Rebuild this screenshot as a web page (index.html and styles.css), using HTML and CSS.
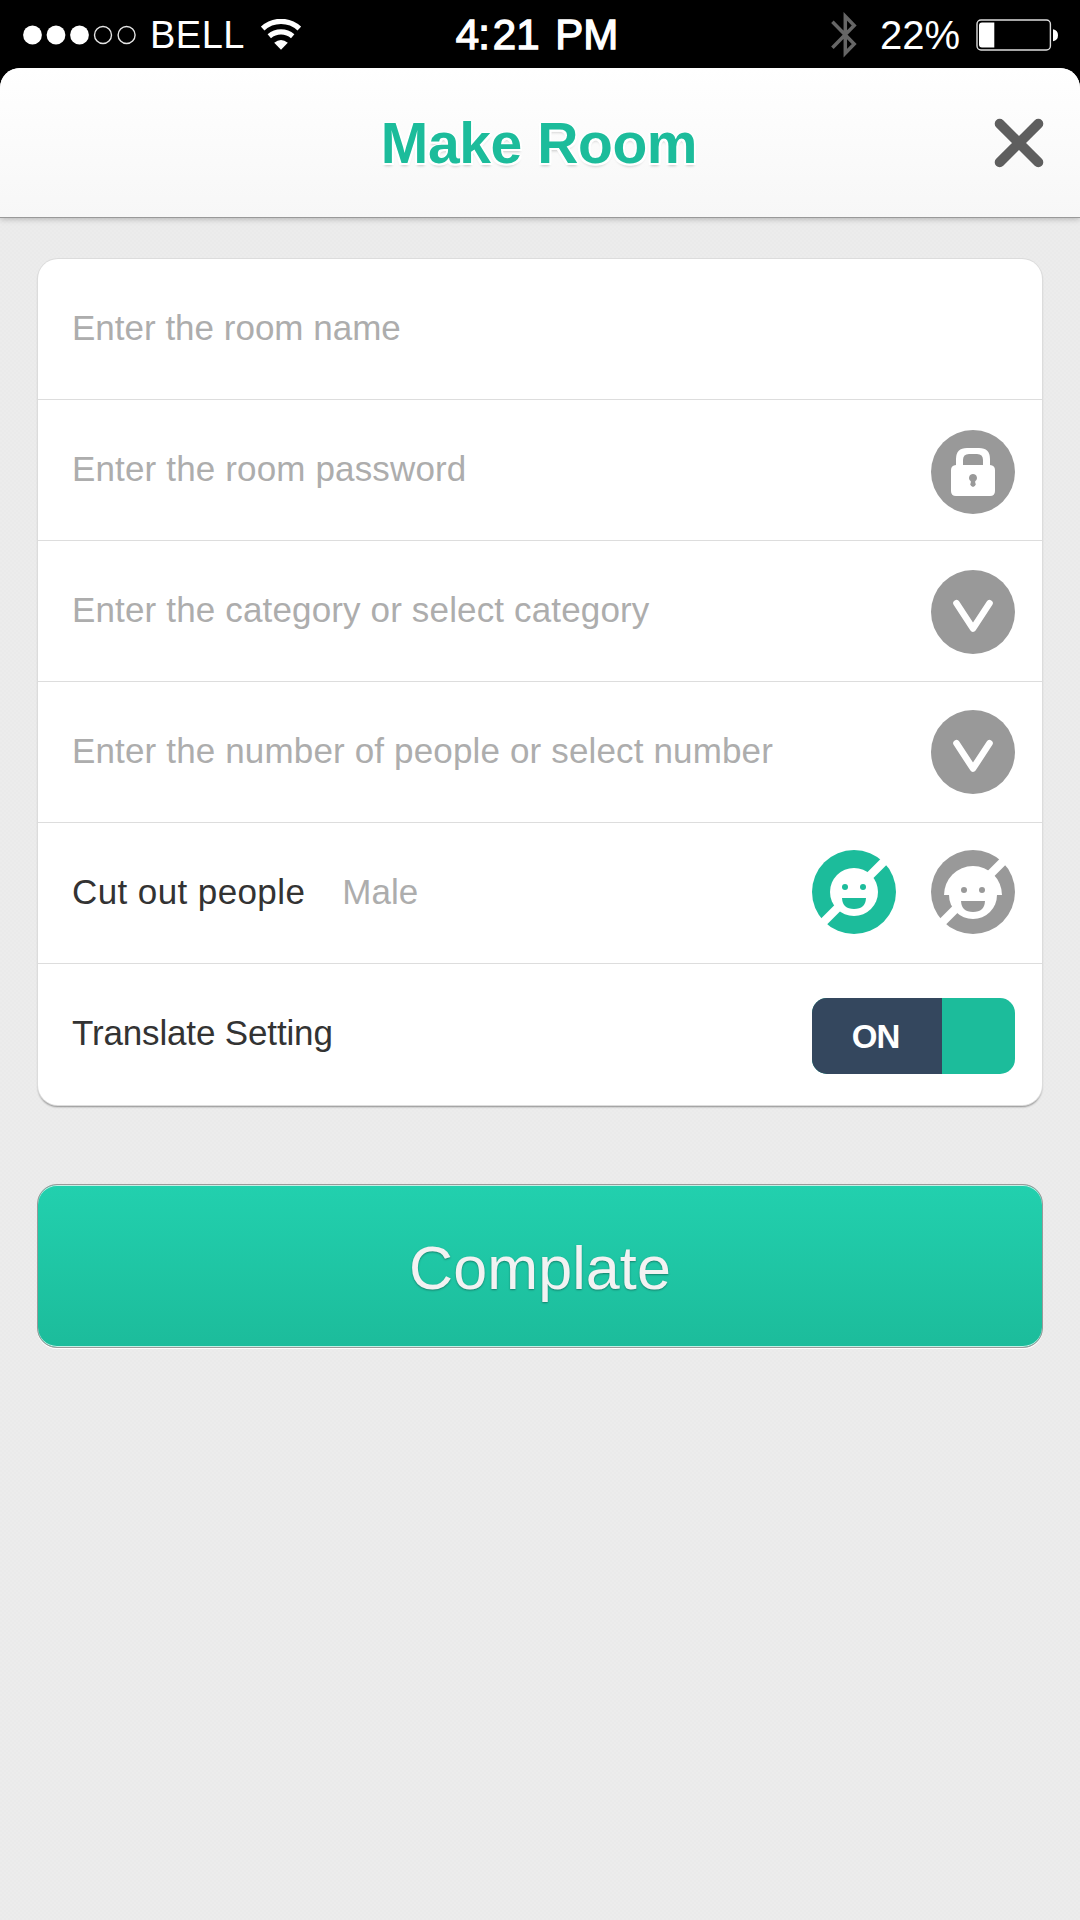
FILE: index.html
```html
<!DOCTYPE html>
<html lang="en">
<head>
<meta charset="utf-8">
<title>Make Room</title>
<link rel="stylesheet" href="styles.css">
</head>
<body>
<div class="status">
  <div class="status-left">
    <svg class="signal" width="114" height="20" viewBox="0 0 114 20">
      <g fill="#fff"><circle cx="9.5" cy="10" r="9.4"/><circle cx="33" cy="10" r="9.4"/><circle cx="56.5" cy="10" r="9.4"/></g>
      <g fill="none" stroke="#e4e4e4" stroke-width="1.4"><circle cx="80" cy="10" r="8.5"/><circle cx="103.6" cy="10" r="8.5"/></g>
    </svg>
    <span class="carrier">BELL</span>
    <svg class="wifi" width="40" height="32" viewBox="0 0 40 32">
      <g fill="none" stroke="#fff" stroke-width="5.2"><path d="M1.7 9.5A27 27 0 0 1 38.3 9.5"/><path d="M8.3 17.2A18 18 0 0 1 31.7 17.2"/></g>
      <path fill="#fff" d="M13.2 23.7Q20 18.2 26.8 23.7L20 30.8Z"/>
    </svg>
  </div>
  <div class="clock"><span class="hour">4</span><span class="colon">:</span><span class="minutes">21 PM</span></div>
  <div class="status-right">
    <svg class="bluetooth" width="27" height="46" viewBox="0 0 27 46"><path fill="none" stroke="#666" stroke-width="3.5" d="M1.4 9.8L23.2 32L14.3 41.2V4.3L23.2 13.5L1.4 35.7"/></svg>
    <span class="percent">22%</span>
    <svg class="battery" width="83" height="32" viewBox="0 0 83 32">
      <rect x="1" y="1" width="73.4" height="30" rx="4" fill="none" stroke="#ddd" stroke-width="1.4"/>
      <path fill="#fff" d="M3 6.500a3 3 0 0 1 3-3H18.300V28.500H6a3 3 0 0 1-3-3ZM77 10.300q5 1 5 6t-5 6Z"/>
    </svg>
  </div>
</div>
<div class="screen">
  <header class="header">
    <h1 class="title">Make Room</h1>
    <svg class="close" width="50" height="50" viewBox="0 0 50 50"><path stroke="#5e5e5e" stroke-width="10" stroke-linecap="round" d="M5.700 5.700L44.300 44.300M44.300 5.700L5.700 44.300"/></svg>
  </header>
  <main class="content">
    <section class="card">
      <div class="row"><span class="hint name">Enter the room name</span></div>
      <div class="row">
        <span class="hint">Enter the room password</span>
        <svg class="icon icon-lock" viewBox="0 0 84 84">
          <circle cx="42" cy="42" r="42" fill="#999"/>
          <path fill="#fff" fill-rule="evenodd" d="M25 35V29Q25 18 36 18H48Q59 18 59 29V35Q64 35.500 64 40V61Q64 66 59 66H25Q20 66 20 61V40Q20 35.500 25 35ZM32 35H52V30Q52 24 46 24H38Q32 24 32 30Z"/>
          <path fill="#999" d="M42 44a4 4 0 0 1 2.200 7.300V52.500a2.700 2.700 0 1 1-4.400 0V51.300A4 4 0 0 1 42 44Z"/>
        </svg>
      </div>
      <div class="row">
        <span class="hint">Enter the category or select category</span>
        <svg class="icon icon-category" viewBox="0 0 84 84"><circle cx="42" cy="42" r="42" fill="#999"/><path fill="none" stroke="#fff" stroke-width="6.600" stroke-linecap="round" stroke-linejoin="round" d="M25.500 33.300L42 58.500L58.500 33.300"/></svg>
      </div>
      <div class="row">
        <span class="hint">Enter the number of people or select number</span>
        <svg class="icon" viewBox="0 0 84 84"><circle cx="42" cy="42" r="42" fill="#999"/><path fill="none" stroke="#fff" stroke-width="6.600" stroke-linecap="round" stroke-linejoin="round" d="M25.500 33.300L42 58.500L58.500 33.300"/></svg>
      </div>
      <div class="row">
        <span class="label">Cut out people</span>
        <span class="hint value">Male</span>
        <div class="faces">
          <svg class="icon" viewBox="0 0 84 84">
            <circle cx="42" cy="42" r="42" fill="#1cbc9b"/>
            <path stroke="#fff" stroke-width="8.300" d="M5 78.500L78 5.500"/>
            <circle cx="42" cy="42" r="24" fill="#fff"/>
            <g fill="#1cbc9b"><circle cx="33" cy="37" r="3"/><circle cx="51" cy="37" r="3"/><path d="M30 48H54Q53.500 59 42 59T30 48Z"/></g>
          </svg>
          <svg class="icon" viewBox="0 0 84 84">
            <circle cx="42" cy="42" r="42" fill="#999"/>
            <path stroke="#fff" stroke-width="8.300" d="M5 78.500L78 5.500"/>
            <circle cx="42" cy="45" r="24" fill="#fff"/>
            <path fill="#fff" d="M13 45A29 29 0 0 1 71 45Z"/>
            <g fill="#999"><circle cx="33" cy="40" r="3"/><circle cx="51" cy="40" r="3"/><path d="M30 51H54Q53.500 62 42 62T30 51Z"/></g>
          </svg>
        </div>
      </div>
      <div class="row">
        <span class="label translate">Translate Setting</span>
        <div class="toggle"><span class="toggle-on">ON</span></div>
      </div>
    </section>
    <button class="submit" type="button">Complate</button>
  </main>
</div>
</body>
</html>
```
FILE: styles.css
```css
* { box-sizing: border-box; }
body {
  margin: 0;
  width: 1080px;
  height: 1920px;
  overflow: hidden;
  display: flex;
  flex-direction: column;
  background: #000;
  font-family: "Liberation Sans", Arial, sans-serif;
}
svg { display: block; flex: none; }

.status {
  flex: none;
  height: 68px;
  padding: 1px 21px 0 23px;
  display: grid;
  grid-template-columns: 1fr auto 1fr;
  align-items: center;
  color: #fff;
  white-space: nowrap;
}
.status-left, .status-right { display: flex; align-items: center; }
.status-right { justify-content: flex-end; }
.carrier { margin-left: 13px; font-size: 38px; line-height: 44px; letter-spacing: 0.5px; padding-top: 1px; }
.wifi { margin-left: 16px; }
.clock { font-size: 42px; line-height: 48px; padding: 1px 8px 0 0; -webkit-text-stroke: 1.3px #fff; }
.hour { letter-spacing: -1px; }
.colon { letter-spacing: 3px; }
.minutes { word-spacing: 4px; }
.bluetooth { margin-top: 1px; }
.percent { margin: 0 16px 0 22px; font-size: 40px; line-height: 44px; padding-top: 1px; }

.screen {
  flex: 1;
  border-radius: 20px 20px 0 0;
  overflow: hidden;
  background: repeating-conic-gradient(#eaeaea 0 25%, #ececec 0 50%) 0 0 / 4px 4px;
}
.header {
  height: 150px;
  display: grid;
  grid-template-columns: 1fr auto 1fr;
  align-items: center;
  border-bottom: 1px solid #999;
  background: linear-gradient(#fff, #f7f7f7);
  box-shadow: 0 1px 6px rgba(0, 0, 0, 0.25);
}
.title {
  grid-column: 2;
  margin: 0;
  padding: 1px 2px 0 0;
  font-size: 57px;
  line-height: 64px;
  letter-spacing: -0.4px;
  color: #1cbc9b;
  text-shadow: 2px 0 #fff, -2px 0 #fff, 0 -1px #fff, 0 2px #fff, 2px 2px #fff, -2px 2px #fff, 0 3px 3px rgba(0, 0, 0, 0.2);
}
.close { justify-self: end; margin: 1px 36px 0 0; }

.content { padding: 41px 38px 0; }
.card {
  border-radius: 20px;
  background: #fff;
  box-shadow: 0 0 0 1px #dcdcdc, 0 2px 2px rgba(0, 0, 0, 0.4);
}
.row {
  height: 141px;
  padding: 0 27px 0 34px;
  display: flex;
  align-items: center;
  border-bottom: 1px solid #ddd;
  font-size: 35px;
  line-height: 40px;
  white-space: nowrap;
}
.row:last-child { border-bottom: 0; }
.hint { color: #adadad; padding-bottom: 3px; letter-spacing: 0.15px; }
.name { letter-spacing: 0; }
.label { color: #333; padding-bottom: 3px; letter-spacing: 0.4px; }
.translate { letter-spacing: -0.15px; }
.value { margin-left: 37px; letter-spacing: 0; }
.icon { width: 84px; height: 84px; margin-left: auto; }
.icon-lock { margin-top: 4px; }
.icon-category { margin-top: 2px; }
.faces { margin: 0 0 2px auto; display: flex; gap: 35px; }
.toggle {
  width: 203px;
  height: 76px;
  margin: 3px 0 0 auto;
  border-radius: 15px;
  overflow: hidden;
  display: flex;
  background: #1cbc9b;
}
.toggle-on {
  width: 130px;
  padding: 1px 3px 0 0;
  background: #34475e;
  color: #fff;
  font-size: 33px;
  font-weight: bold;
  line-height: 76px;
  letter-spacing: -1px;
  text-align: center;
}
.submit {
  display: block;
  width: 1006px;
  height: 164px;
  margin: 79px 0 0 -1px;
  padding: 3px 0 0;
  border: 1px solid #999;
  border-radius: 20px;
  background: linear-gradient(#22d0ae, #1cbc9b);
  box-shadow: inset 0 1px #c5efe5, inset 0 -1px #c5efe5, 0 1px #fff;
  color: #f2f2f2;
  font: 61px "Liberation Sans", Arial, sans-serif;
  letter-spacing: 0.1px;
  text-shadow: 0 1px 2px rgba(0, 0, 0, 0.35);
}
```
